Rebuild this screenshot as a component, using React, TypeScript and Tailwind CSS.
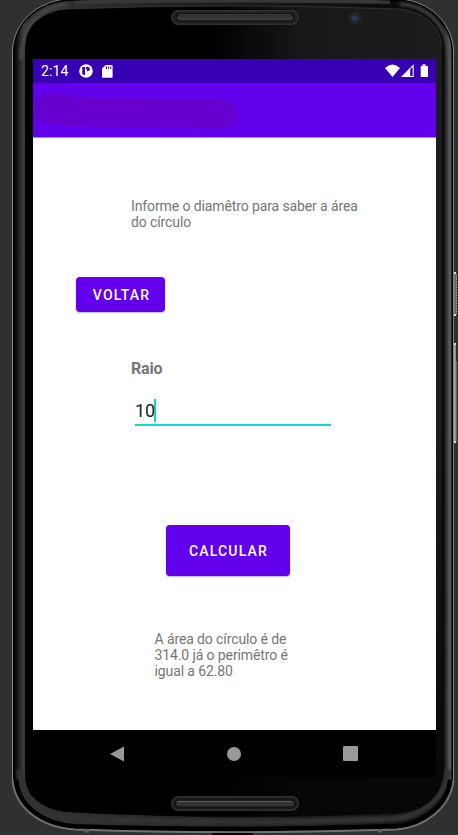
import React from "react";

const OUTER =
  "M12.5 50 C14 22 37 2 66 -1 Q230 -8 400 -1 C430 1 452 23 453.5 50 V780 C451 806 427 827 397 829.5 Q230 835 75 829.5 C39 827 15 807 12.5 780 Z";
const FACE =
  "M25 45 C26 24 43 11 67 9 Q230 3 400 9 C424 12 440 25 442 47 V777 C441 798 423 811 400 813 Q230 821 67 812 C41 809 25 796 25 775 Z";

function PhoneBody() {
  return (
    <svg className="absolute inset-0" width="458" height="835" viewBox="0 0 458 835" aria-hidden="true">
      <defs>
        <linearGradient id="side" gradientUnits="userSpaceOnUse" x1="13" y1="0" x2="453" y2="0">
          <stop offset="0" stopColor="#050505" />
          <stop offset="0.007" stopColor="#0b0b0b" />
          <stop offset="0.014" stopColor="#222" />
          <stop offset="0.024" stopColor="#3c3c3c" />
          <stop offset="0.04" stopColor="#333" />
          <stop offset="0.5" stopColor="#1c1c1c" />
          <stop offset="0.97" stopColor="#060606" />
          <stop offset="0.978" stopColor="#090909" />
          <stop offset="0.986" stopColor="#343434" />
          <stop offset="0.992" stopColor="#5c5c5c" />
          <stop offset="1" stopColor="#444" />
        </linearGradient>
        <linearGradient id="glass" x1="0" x2="1" y1="0" y2="0">
          <stop offset="0.45" stopColor="#000" />
          <stop offset="0.66" stopColor="#171717" />
          <stop offset="1" stopColor="#1d1d1d" />
        </linearGradient>
        <linearGradient id="fade" x1="0" x2="0" y1="0" y2="1">
          <stop offset="0.5" stopColor="#000" stopOpacity="0" />
          <stop offset="0.95" stopColor="#000" stopOpacity="0.75" />
        </linearGradient>
        <linearGradient id="bar" x1="0" x2="0" y1="0" y2="1">
          <stop offset="0" stopColor="#292929" />
          <stop offset="1" stopColor="#414141" />
        </linearGradient>
        <linearGradient id="key" x1="0" x2="1" y1="0" y2="0">
          <stop offset="0" stopColor="#bbb" />
          <stop offset="1" stopColor="#555" />
        </linearGradient>
        <filter id="soft" x="-10%" y="-20%" width="120%" height="140%">
          <feGaussianBlur stdDeviation="1.5" />
        </filter>
        <clipPath id="body">
          <path d={OUTER} />
        </clipPath>
      </defs>
      <path d={OUTER} fill="url(#side)" />
      <g clipPath="url(#body)">
        <path d="M20 770 C21 803 45 817 77 819 Q230 825 392 819 C422 817 444 799 449 770" fill="none" stroke="#333" strokeWidth="7" filter="url(#soft)" />
        <path d="M21 60 C22 24 41 7 67 4 M400 4 C428 6 448 25 450 60" fill="none" stroke="#4b4b4b" strokeWidth="3" filter="url(#soft)" />
        <path d="M75 2 Q230 -1 390 2" fill="none" stroke="#373737" strokeWidth="4" />
        <path d="M13 780 C15 807 39 827 75 829.5 Q230 835 397 829.5 C427 827 451 806 453.5 780" fill="none" stroke="#000" strokeWidth="11" />
        <path d={OUTER} fill="none" stroke="#000" strokeWidth="4" />
      </g>
      <path d={OUTER} fill="none" stroke="#858585" strokeWidth="1" />
      <path d="M12.5 780 C15 807 39 827 75 829.5 Q230 835 397 829.5 C427 827 451 806 453.5 780" fill="none" stroke="#707070" strokeWidth="2" />
      <path d={FACE} fill="url(#glass)" />
      <path d={FACE} fill="url(#fade)" />
      <path d="M25 45 C26 24 43 11 67 9 Q230 3 400 9 C424 12 440 25 442 47" fill="none" stroke="#454545" strokeWidth="0.6" />
      <path d="M442.5 45V780" stroke="#050505" />
      <g transform="translate(171 10)">
        <rect width="128" height="15" rx="7.5" fill="#303030" />
        <rect x="1.5" y="1.5" width="125" height="12" rx="6" fill="#202020" />
        <rect x="5" y="4" width="118" height="7" rx="3.5" fill="url(#bar)" stroke="#050505" />
        <path d="M8 4.5H120" stroke="#3d3d3d" />
      </g>
      <g transform="translate(171 796)">
        <rect width="128" height="15" rx="7.5" fill="#303030" />
        <rect x="1.5" y="1.5" width="125" height="12" rx="6" fill="#1c1c1c" />
        <rect x="4" y="4" width="120" height="7" rx="3.5" fill="#333" stroke="#0c0c0c" />
        <path d="M7 5.5H121" stroke="#5a5a5a" />
      </g>
      <circle cx="355" cy="18.5" r="6.5" fill="#242424" />
      <circle cx="355" cy="18.5" r="4.5" fill="#222838" />
      <circle cx="354.5" cy="18" r="2.5" fill="#303b5a" />
      <path d="M454 272H456L457 275V313L456 316H454Z" fill="#555" />
      <path d="M454.8 273V315" stroke="#888" />
      <path d="M456.5 275V314" stroke="#aaa" strokeDasharray="1 1" />
      <path d="M454 343H456V361H457V440L456 443H454Z" fill="url(#key)" />
      <path d="M454 272H456V274H454ZM454 314H456V316H454ZM454 343H456V345H454ZM454 441H456V443H454Z" fill="#ddd" />
      <path d="M84 829.5H89V832.5H84ZM377 829.5H382V832.5H377Z" fill="#5c5c5c" />
      <path d="M211 835L213 833H252L254 835Z" fill="#000" />
    </svg>
  );
}

function StatusBar() {
  return (
    <div className="flex h-6 items-center bg-[#3700b3] px-2 text-white">
      <span className="w-[38px] text-[14px] leading-6 tracking-[0.1px]">2:14</span>
      <svg width="14" height="14" viewBox="0 0 14 14">
        <circle cx="7" cy="7" r="6.8" fill="#fff" />
        <path d="M3.3 3H6V11.2L3.3 10.3Z" fill="#3700b3" />
        <path d="M7 3H8.8A2.1 2.1 0 0 1 8.8 7.2H8V5H7Z" fill="#3700b3" />
      </svg>
      <svg className="ml-[9px]" width="11" height="13" viewBox="0 0 11 13">
        <path d="M3.6 0H9.6Q10.6 0 10.6 1V11.7Q10.6 12.7 9.6 12.7H1Q0 12.7 0 11.7V3.6Z" fill="#fff" />
        <path d="M4.5 1.5V4M6.7 1.5V4M8.8 1.5V4" stroke="#3700b3" strokeWidth="1" />
      </svg>
      <svg className="ml-auto" width="43" height="14" viewBox="0 0 43 14">
        <path d="M0 4Q7.5 -3 15 4L7.5 13Z" fill="#fff" />
        <path d="M16 13L28.7 0.3V13Z" fill="#fff" />
        <path d="M25.2 5.3L27.6 2.9V12H25.2Z" fill="#3700b3" />
        <path d="M37.5 0.3H40.5V2H43V13H35.7V2H37.5Z" fill="#fff" />
      </svg>
    </div>
  );
}

export default function App() {
  return (
    <div className="relative h-[835px] w-[458px] overflow-hidden bg-[#2f3032] pl-[33px] pt-[59px] font-[Roboto,sans-serif]">
      <PhoneBody />
      <div className="relative flex h-[718px] w-[403px] flex-col bg-white">
        <StatusBar />
        <header className="h-[54px] shrink-0 bg-[#6200ee]">
          <svg width="210" height="54" viewBox="0 0 210 54">
            <path d="M17 11Q49 15 82 15L190 16.5C199 17 203 23 203 31C203 40 197 46 189 46L114 45Q60 45 18 41C7 41 1 35 1 27C1 17 8 10 17 11Z" fill="#6600cc" />
          </svg>
        </header>
        <main className="flex h-[593px] flex-col items-start border-t border-[#a98be9] text-[14px] leading-4 text-[#757575]">
          <p className="ml-[98px] mt-[60px] w-[232px] whitespace-nowrap tracking-[-0.11px]">
            Informe o diamêtro para saber a área
            <br />
            do círculo
          </p>
          <button className="ml-[43px] mt-[47px] h-[35px] w-[89px] rounded-[4px] bg-[#6200ee] pl-[2px] text-[14px] font-medium leading-4 tracking-[1.15px] text-white shadow-[0_1px_2px_rgba(0,0,0,0.3)]">
            VOLTAR
          </button>
          <label htmlFor="raio" className="ml-[98px] mt-[48px] text-[16px] font-bold leading-[18px] tracking-[-0.2px]">
            Raio
          </label>
          <div id="raio" className="ml-[102px] mt-[21px] flex h-[27px] w-[196px] items-start border-b-2 border-[#14d7c5] text-[18px] leading-6 tracking-[-0.2px] text-[#212121]">
            <span className="w-[19px]">10</span>
            <span className="h-[23px] w-0.5 bg-[#03dac5]" />
          </div>
          <button className="ml-[133px] mt-[99px] h-[51px] w-[124px] rounded-[4px] bg-[#6200ee] pl-px text-[14px] font-medium leading-4 tracking-[1.15px] text-white shadow-[0_1px_2px_rgba(0,0,0,0.3)]">
            CALCULAR
          </button>
          <p className="ml-[121.5px] mt-[55px] whitespace-nowrap tracking-[-0.11px]">
            A área do círculo é de
            <br />
            314.0 já o perimêtro é
            <br />
            igual a 62.80
          </p>
        </main>
        <nav className="flex h-[47px] items-center bg-black pl-[77px] text-[#999]">
          <svg width="14" height="16" viewBox="0 0 14 16"><path d="M14 .5V15.5L0 8Z" fill="currentColor" /></svg>
          <span className="ml-[103px] size-[14px] rounded-full bg-[#999]" />
          <span className="ml-[102px] size-[15px] rounded-[1px] bg-[#999]" />
        </nav>
      </div>
    </div>
  );
}
